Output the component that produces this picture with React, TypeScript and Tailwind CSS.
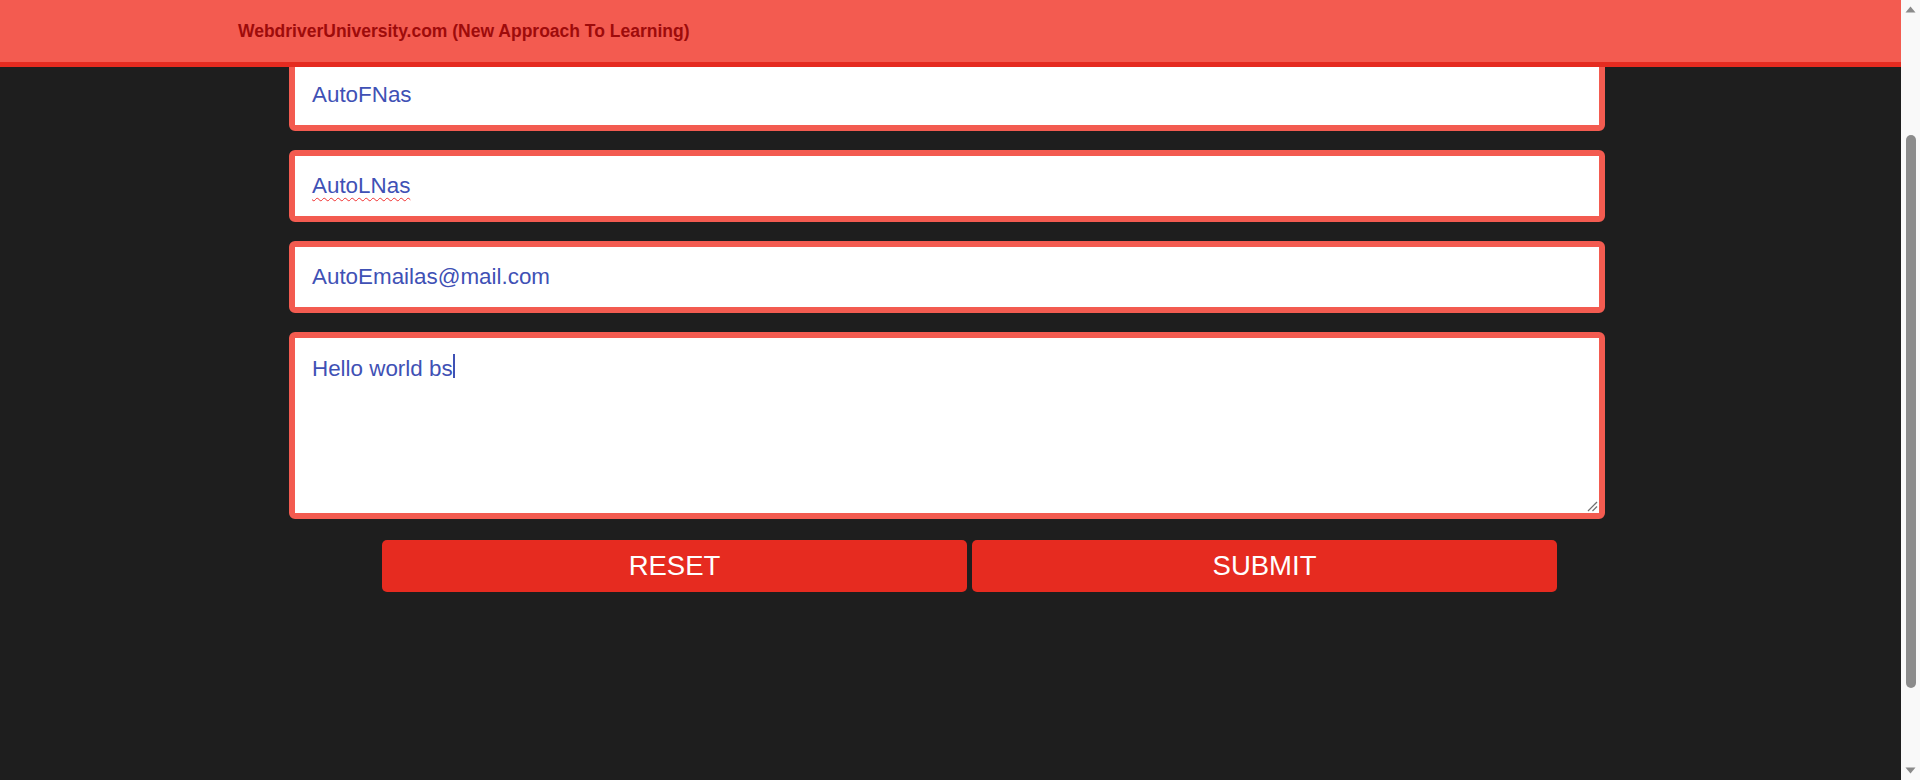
export default function App() {
  return (
    <div className="flex h-[780px] w-[1920px] overflow-hidden bg-[#1e1e1e] font-['Liberation_Sans',Arial,sans-serif]">
      <div className="flex min-w-0 flex-1 flex-col">
        <header className="relative z-10 flex h-[67px] shrink-0 items-center border-b-[5px] border-[#e52b20] bg-[#f35b50] pl-[238px]">
          <span className="text-[17.5px] font-bold text-[#9e0b0b]">
            WebdriverUniversity.com (New Approach To Learning)
          </span>
        </header>
        <div className="-mt-[8px] flex flex-col pl-[289px]">
          <div className="flex h-[72px] w-[1316px] items-center rounded-[6px] border-[6px] border-[#f35b50] bg-white pl-[17px] text-[22.4px] text-[#3f51b5]">
            AutoFNas
          </div>
          <div className="mt-[19px] flex h-[72px] w-[1316px] items-center rounded-[6px] border-[6px] border-[#f35b50] bg-white pl-[17px] text-[22.4px] text-[#3f51b5]">
            <span className="underline decoration-[#f03030] decoration-wavy decoration-1 underline-offset-[4px]">AutoLNas</span>
          </div>
          <div className="mt-[19px] flex h-[72px] w-[1316px] items-center rounded-[6px] border-[6px] border-[#f35b50] bg-white pl-[17px] text-[22.4px] text-[#3f51b5]">
            AutoEmailas@mail.com
          </div>
          <div className="relative mt-[19px] flex h-[187px] w-[1316px] items-start rounded-[6px] border-[6px] border-[#f35b50] bg-white pl-[17px] pt-[14px] text-[22.4px] text-[#3f51b5]">
            <span>Hello world bs</span>
            <span className="mt-[2px] h-[24px] w-[2px] bg-[#3f51b5]" />
            <svg className="absolute bottom-[1px] right-[1px]" width="11" height="11" viewBox="0 0 11 11">
              <line x1="1" y1="10" x2="10" y2="1" stroke="#6f6f6f" strokeWidth="1.2" />
              <line x1="5.5" y1="10" x2="10" y2="5.5" stroke="#6f6f6f" strokeWidth="1.2" />
            </svg>
          </div>
          <div className="ml-[93px] mt-[21px] flex gap-[5px]">
            <button className="flex h-[52px] w-[585px] items-center justify-center rounded-[5px] bg-[#e62b20] text-[27.5px] text-white">
              RESET
            </button>
            <button className="flex h-[52px] w-[585px] items-center justify-center rounded-[5px] bg-[#e62b20] text-[27.5px] text-white">
              SUBMIT
            </button>
          </div>
        </div>
      </div>
      <div className="flex w-[19px] shrink-0 flex-col items-center bg-[#f9f9f9] pb-[6px] pt-[6px]">
        <svg width="11" height="7" viewBox="0 0 11 7">
          <polygon points="5.5,0.5 10.5,6.5 0.5,6.5" fill="#8a8a8a" />
        </svg>
        <div className="ml-[1px] mt-[122px] h-[553px] w-[10px] rounded-full bg-[#8c8c8c]" />
        <div className="flex-1" />
        <svg width="11" height="7" viewBox="0 0 11 7">
          <polygon points="0.5,0.5 10.5,0.5 5.5,6.5" fill="#8a8a8a" />
        </svg>
      </div>
    </div>
  );
}
